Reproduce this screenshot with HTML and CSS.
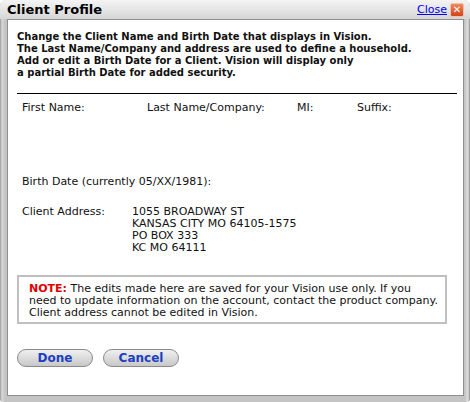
FILE: index.html
```html
<!DOCTYPE html>
<html lang="en">
<head>
    <meta charset="UTF-8">
    <title>Client Profile</title>
    <link rel="stylesheet" href="styles.css">
</head>
<body>
<div class="dialog">
    <div class="titlebar">
        <h1 class="title">Client Profile</h1>
        <a class="close-link" href="#">Close</a>
        <span class="close-box">&#10005;</span>
    </div>
    <div class="panel">
        <p class="intro">
            Change the Client Name and Birth Date that displays in Vision.<br>
            The Last Name/Company and address are used to define a household.<br>
            Add or edit a Birth Date for a Client. Vision will display only<br>
            a partial Birth Date for added security.
        </p>
        <hr class="rule">
        <div class="names">
            <span class="col-first">First Name:</span>
            <span class="col-last">Last Name/Company:</span>
            <span class="col-mi">MI:</span>
            <span class="col-suffix">Suffix:</span>
        </div>
        <div class="birth">Birth Date (currently 05/XX/1981):</div>
        <div class="address">
            <span class="address-label">Client Address:</span>
            <div class="address-lines">
                1055 BROADWAY ST<br>
                KANSAS CITY MO 64105-1575<br>
                PO BOX 333<br>
                KC MO 64111
            </div>
        </div>
        <div class="note">
            <b class="note-tag">NOTE:</b> The edits made here are saved for your Vision use only. If you<br>
            need to update information on the account, contact the product company.<br>
            Client address cannot be edited in Vision.
        </div>
        <div class="buttons">
            <button class="pill">Done</button>
            <button class="pill">Cancel</button>
        </div>
    </div>
</div>
</body>
</html>
```

FILE: styles.css
```css
body {
    margin: 0;
    font-family: "DejaVu Sans", Verdana, sans-serif;
    font-size: 11px;
    color: #111;
    background: #fff;
}
.dialog {
    width: 470px;
    height: 402px;
    box-sizing: border-box;
    padding: 0 6px 6px 7px;
    background: linear-gradient(to right, #9a9a9a, #d8d8d8 2px, #c4c4c4 5px, #c4c4c4 calc(100% - 5px), #e0e0e0 calc(100% - 2px), #8a8a8a);
    border-radius: 6px 6px 3px 3px;
    display: flex;
    flex-direction: column;
}
.titlebar {
    height: 19px;
    display: flex;
    align-items: center;
    margin: 0 -6px 0 -7px;
    padding: 0 6px 0 7px;
    background: linear-gradient(to bottom, #f4f4f4, #d6d6d6);
    border-radius: 6px 6px 0 0;
}
.title {
    margin: 0;
    flex: 1;
    font-size: 13px;
    font-weight: bold;
    color: #000;
}
.close-link {
    color: #0000ee;
    font-size: 11px;
    margin-right: 3px;
}
.close-box {
    width: 14px;
    height: 14px;
    box-sizing: border-box;
    border: 1px solid #f0c0a8;
    border-radius: 2px;
    background: linear-gradient(to bottom, #ef8a5c, #d2431b);
    color: #fff;
    font-size: 10px;
    font-weight: bold;
    line-height: 12px;
    text-align: center;
}
.panel {
    flex: 1;
    background: #fff;
    border: 1px solid #8e8e8e;
    padding: 11px 6px 0 9px;
}
.intro {
    margin: 0;
    font-size: 10px;
    font-weight: bold;
    line-height: 12px;
}
.rule {
    margin: 14px 0 0 0;
    border: none;
    border-top: 1px solid #000;
}
.names {
    display: flex;
    margin-top: 8px;
    padding-left: 5px;
    line-height: 12px;
}
.col-first { width: 125px; }
.col-last { width: 150px; }
.col-mi { width: 60px; }
.birth {
    margin-top: 62px;
    padding-left: 5px;
    line-height: 12px;
}
.address {
    display: flex;
    margin-top: 18px;
    padding-left: 5px;
    line-height: 12px;
}
.address-label { width: 110px; }
.note {
    margin: 21px 10px 0 0;
    border: 2px solid #c0c0c0;
    padding: 6px 0 3px 10px;
    line-height: 12px;
    white-space: nowrap;
}
.note-tag { color: #e00000; }
.buttons {
    display: flex;
    gap: 10px;
    margin-top: 25px;
}
.pill {
    width: 76px;
    height: 18px;
    padding: 0;
    border: 1px solid #8a8a8a;
    border-radius: 9px;
    background: linear-gradient(to bottom, #f0f0f0, #c8c8c8);
    color: #1b3fc4;
    font-family: "DejaVu Sans", Verdana, sans-serif;
    font-size: 12px;
    font-weight: bold;
    line-height: 16px;
}
```
